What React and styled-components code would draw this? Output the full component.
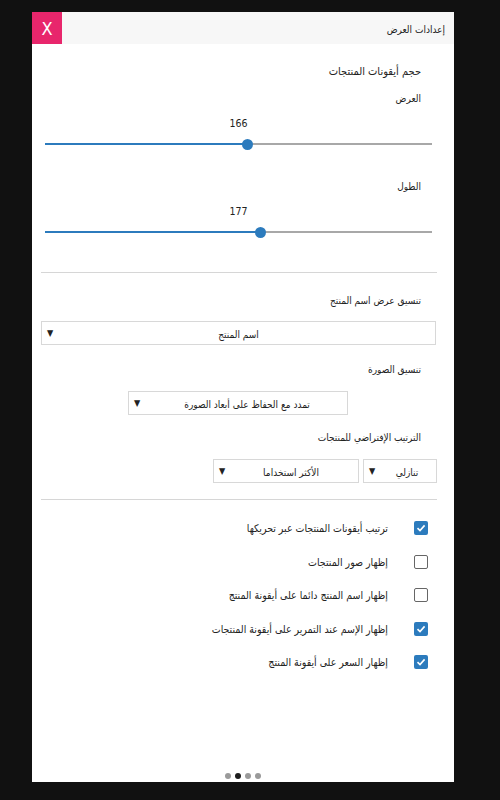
import React from 'react'
import styled, { createGlobalStyle } from 'styled-components'

const GlobalStyle = createGlobalStyle`
  html, body {
    margin: 0;
    padding: 0;
    background: #111111;
  }
  body {
    font-family: "DejaVu Sans Condensed", "DejaVu Sans", sans-serif;
  }
`

const Page = styled.div`
  width: 500px;
  height: 800px;
  padding: 12px 0 0 32px;
  box-sizing: border-box;
`

const Panel = styled.div`
  width: 422px;
  height: 770px;
  background: #ffffff;
  display: flex;
  flex-direction: column;
  direction: rtl;
  color: #222;
`

const Header = styled.div`
  height: 32px;
  background: #f7f7f7;
  display: flex;
  align-items: center;
  justify-content: space-between;
  padding-right: 9px;
`

const Title = styled.div`
  font-size: 10px;
  padding-top: 2px;
`

const CloseButton = styled.button`
  width: 30px;
  height: 32px;
  border: none;
  background: #e8266c;
  color: #fff;
  font-family: "DejaVu Sans Condensed", sans-serif;
  font-size: 18px;
  padding: 0;
  cursor: pointer;
`

const Body = styled.div`
  flex: 1;
  display: flex;
  flex-direction: column;
  padding: 0 9px;
`

const Section = styled.div`
  display: flex;
  flex-direction: column;
  padding: 0 24px 0 0;
`

const SectionTitle = styled.div`
  font-size: 11px;
  margin-top: 21px;
  line-height: 14px;
`

const Label = styled.div`
  font-size: 10px;
  line-height: 14px;
  margin-top: ${(p) => p.$top || 0}px;
`

const SliderWrap = styled.div`
  direction: ltr;
  margin: 0 -11px 0 4px;
  display: flex;
  flex-direction: column;
  align-items: center;
`

const SliderValue = styled.div`
  font-size: 10.5px;
  line-height: 14px;
  margin-top: 10px;
`

const Track = styled.div`
  position: relative;
  width: 100%;
  height: 2px;
  background: #a8a8a8;
  margin-top: 13px;
`

const Fill = styled.div`
  position: absolute;
  left: 0;
  top: 0;
  height: 2px;
  background: #2c7bbd;
`

const Thumb = styled.div`
  position: absolute;
  top: -4.5px;
  width: 11px;
  height: 11px;
  margin-left: -5.5px;
  border-radius: 50%;
  background: #2c7bbd;
`

const Divider = styled.div`
  height: 1px;
  background: #d6d6d6;
  margin: ${(p) => p.$top}px 8px 0 0;
`

const SelectRow = styled.div`
  display: flex;
  gap: 4px;
  margin-top: ${(p) => p.$top || 0}px;
  padding-right: ${(p) => p.$right || 0}px;
`

const Select = styled.div`
  width: ${(p) => p.$width}px;
  height: 24px;
  box-sizing: border-box;
  border: 1px solid #d8d8d8;
  display: flex;
  align-items: center;
  justify-content: center;
  position: relative;
  font-size: 10px;
  padding: 2px 0 0 ${(p) => p.$pad || 0}px;
`

const Arrow = styled.span`
  position: absolute;
  left: 5px;
  top: 6px;
  font-size: 9px;
  color: #222;
`

const CheckList = styled.div`
  display: flex;
  flex-direction: column;
  gap: 19.5px;
  margin-top: 21px;
  padding-right: 17px;
`

const CheckRow = styled.label`
  display: flex;
  align-items: center;
  gap: 26px;
  font-size: 10.5px;
  line-height: 14px;
`

const Box = styled.span`
  width: 14px;
  height: 14px;
  box-sizing: border-box;
  border-radius: 2px;
  border: ${(p) => (p.$checked ? 'none' : '1.5px solid #666')};
  background: ${(p) => (p.$checked ? '#2c7bbd' : '#fff')};
  display: flex;
  align-items: center;
  justify-content: center;
  flex-shrink: 0;
`

const Dots = styled.div`
  margin-top: auto;
  direction: ltr;
  display: flex;
  justify-content: center;
  gap: 4px;
  padding-bottom: 3px;
`

const Dot = styled.span`
  width: 6px;
  height: 6px;
  border-radius: 50%;
  background: ${(p) => (p.$active ? '#1c1c1c' : '#9a9a9a')};
`

const Slider = ({ value, percent }) => (
  <SliderWrap>
    <SliderValue>{value}</SliderValue>
    <Track>
      <Fill style={{ width: `${percent}%` }} />
      <Thumb style={{ left: `${percent}%` }} />
    </Track>
  </SliderWrap>
)

const Check = ({ checked, children }) => (
  <CheckRow>
    <Box $checked={checked}>
      {checked && (
        <svg width="10" height="10" viewBox="0 0 10 10">
          <path d="M1.5 5.2 L4 7.6 L8.6 2.4" stroke="#fff" strokeWidth="1.6" fill="none" />
        </svg>
      )}
    </Box>
    <span>{children}</span>
  </CheckRow>
)

const checks = [
  { text: 'ترتيب أيقونات المنتجات عبر تحريكها', checked: true },
  { text: 'إظهار صور المنتجات', checked: false },
  { text: 'إظهار اسم المنتج دائما على أيقونة المنتج', checked: false },
  { text: 'إظهار الإسم عند التمرير على أيقونة المنتجات', checked: true },
  { text: 'إظهار السعر على أيقونة المنتج', checked: true },
]

const App = () => {
  return (
    <Page>
      <GlobalStyle />
      <Panel>
        <Header>
          <Title>إعدادات العرض</Title>
          <CloseButton>X</CloseButton>
        </Header>
        <Body>
          <Section>
            <SectionTitle>حجم أيقونات المنتجات</SectionTitle>
            <Label $top={13}>العرض</Label>
            <Slider value={166} percent={52.2} />
            <Label $top={35}>الطول</Label>
            <Slider value={177} percent={55.8} />
          </Section>

          <Divider $top={39} />

          <Section>
            <Label $top={21}>تنسيق عرض اسم المنتج</Label>
          </Section>
          <SelectRow $top={13} $right={9}>
            <Select $width={395}>
              اسم المنتج
              <Arrow>▼</Arrow>
            </Select>
          </SelectRow>

          <Section>
            <Label $top={18}>تنسيق الصورة</Label>
          </Section>
          <SelectRow $top={14} $right={97}>
            <Select $width={220} $pad={18}>
              تمدد مع الحفاظ على أبعاد الصورة
              <Arrow>▼</Arrow>
            </Select>
          </SelectRow>

          <Section>
            <Label $top={16}>الترتيب الإفتراضي للمنتجات</Label>
          </Section>
          <SelectRow $top={14} $right={8}>
            <Select $width={74} $pad={14}>
              تنازلي
              <Arrow>▼</Arrow>
            </Select>
            <Select $width={146} $pad={10}>
              الأكثر استخداما
              <Arrow>▼</Arrow>
            </Select>
          </SelectRow>

          <Divider $top={16} />

          <CheckList>
            {checks.map((c) => (
              <Check key={c.text} checked={c.checked}>
                {c.text}
              </Check>
            ))}
          </CheckList>

          <Dots>
            <Dot />
            <Dot $active />
            <Dot />
            <Dot />
          </Dots>
        </Body>
      </Panel>
    </Page>
  )
}

export default App
